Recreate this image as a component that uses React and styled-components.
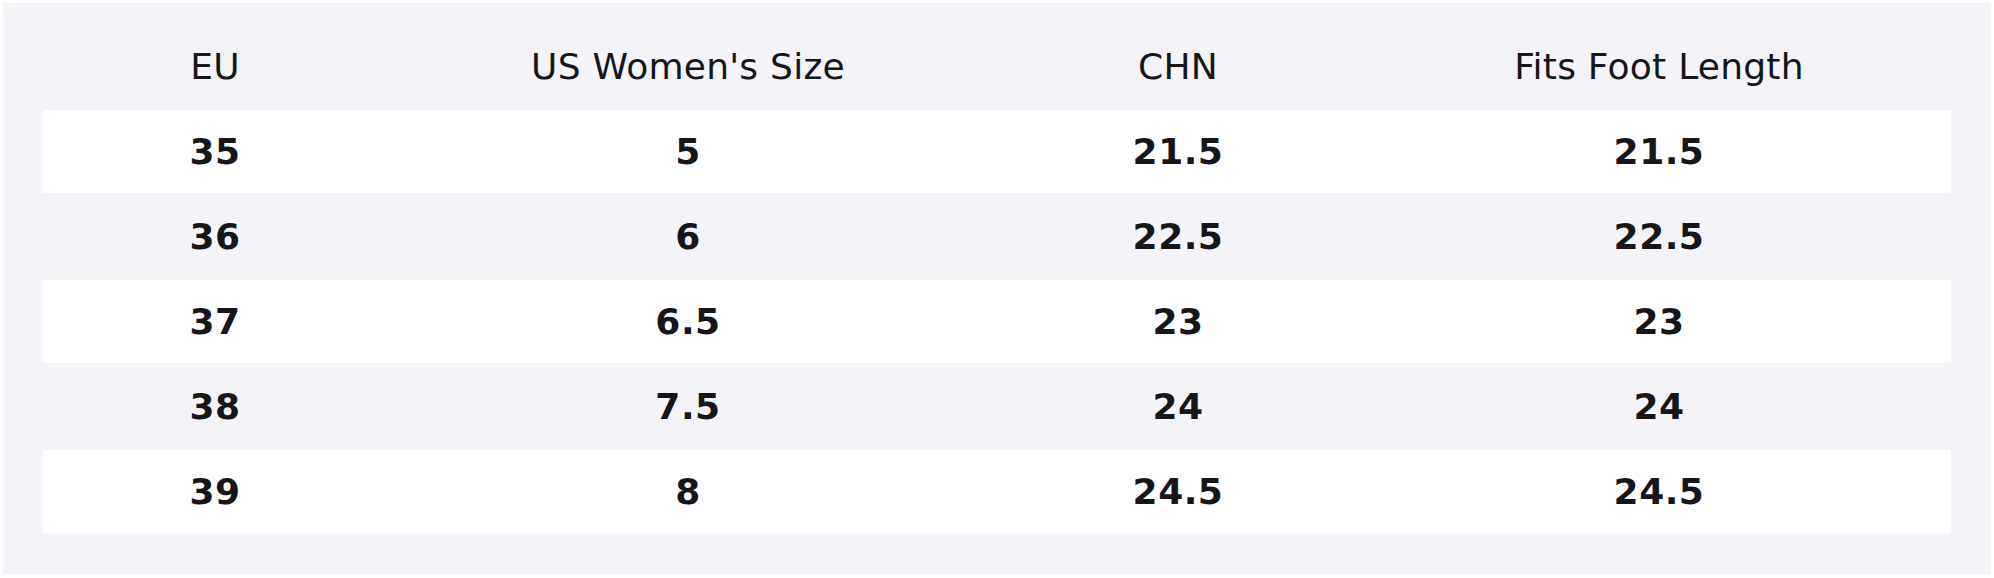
import React from 'react';
import styled, { createGlobalStyle } from 'styled-components';

const GlobalStyles = createGlobalStyle`
  html, body {
    margin: 0;
    padding: 0;
    background: #ffffff;
  }
  body {
    font-family: "DejaVu Sans", "Liberation Sans", sans-serif;
    color: #16161a;
  }
`;

const Page = styled.div`
  padding: 3px;
`;

const Panel = styled.section`
  background: #f4f4f8;
  padding: 0 40px 41px;
`;

const Grid = styled.div`
  display: grid;
  grid-template-columns: 344fr 602fr 378fr 584fr;
`;

const HeadRow = styled(Grid)`
  padding: 43px 0 22px;
`;

const HeadCell = styled.div`
  text-align: center;
  font-size: 36px;
  font-weight: 400;
  line-height: 42px;
  letter-spacing: 0.25px;
  color: #16161a;
`;

const Row = styled(Grid)`
  height: ${p => (p.$white ? 83 : 87)}px;
  align-items: center;
  background: ${p => (p.$white ? '#ffffff' : 'transparent')};
`;

const Cell = styled.div`
  text-align: center;
  font-size: 36px;
  font-weight: 700;
  line-height: 42px;
  letter-spacing: 0.5px;
  color: #16161a;
`;

const headers = ['EU', "US Women's Size", 'CHN', 'Fits Foot Length'];

const rows = [
  ['35', '5', '21.5', '21.5'],
  ['36', '6', '22.5', '22.5'],
  ['37', '6.5', '23', '23'],
  ['38', '7.5', '24', '24'],
  ['39', '8', '24.5', '24.5'],
];

const SizeTable = () => (
  <Panel>
    <HeadRow>
      {headers.map(h => (
        <HeadCell key={h}>{h}</HeadCell>
      ))}
    </HeadRow>
    {rows.map((r, i) => (
      <Row key={r[0]} $white={i % 2 === 0}>
        {r.map((v, j) => (
          <Cell key={j}>{v}</Cell>
        ))}
      </Row>
    ))}
  </Panel>
);

export default function App() {
  return (
    <>
      <GlobalStyles />
      <Page>
        <SizeTable />
      </Page>
    </>
  );
}
